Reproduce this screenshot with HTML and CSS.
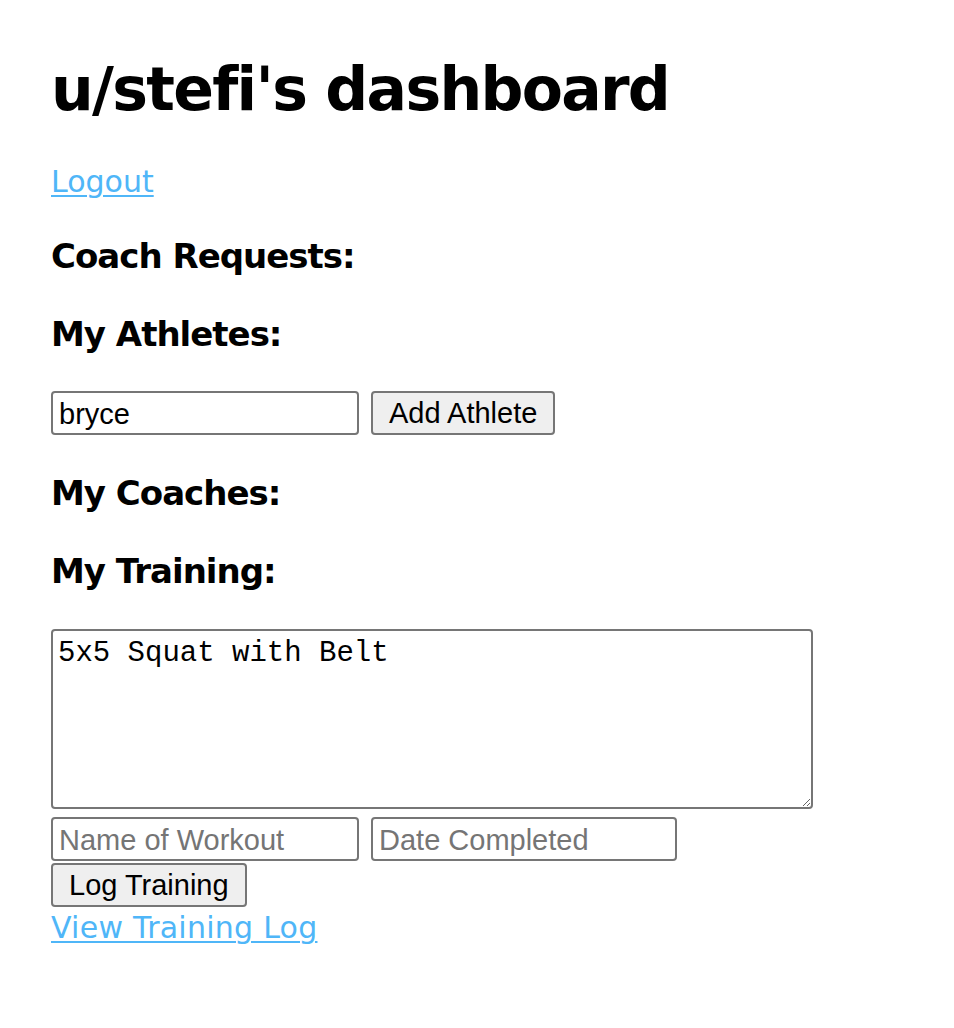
FILE: index.html
```html
<!DOCTYPE html>
<html>
<head>
<meta charset="utf-8">
<title>Dashboard</title>
<link rel="stylesheet" href="styles.css">
</head>
<body>
<main class="page">
  <h1 class="title">u/stefi's dashboard</h1>
  <div class="link-row"><a class="link" href="#">Logout</a></div>
  <h3 class="section section-first">Coach Requests:</h3>
  <h3 class="section">My Athletes:</h3>
  <form class="add-form">
    <input class="field field-user" type="text" value="bryce">
    <button class="btn" type="button">Add Athlete</button>
  </form>
  <h3 class="section">My Coaches:</h3>
  <h3 class="section">My Training:</h3>
  <form class="train-form">
    <textarea class="notes">5x5 Squat with Belt</textarea>
    <div class="train-row">
      <input class="field field-name" type="text" placeholder="Name of Workout">
      <input class="field field-date" type="text" placeholder="Date Completed">
    </div>
    <div class="btn-row"><button class="btn" type="button">Log Training</button></div>
  </form>
  <div class="link-row link-row-last"><a class="link link-wide" href="#">View Training Log</a></div>
</main>
</body>
</html>
```

FILE: styles.css
```css
html, body {
  margin: 0;
  padding: 0;
  background: #ffffff;
}

.page {
  padding: 54px 0 0 51px;
  font-family: "DejaVu Sans", sans-serif;
  color: #000000;
}

.title {
  margin: 0;
  font-size: 60px;
  line-height: 70px;
  font-weight: bold;
  letter-spacing: -1.7px;
}

.link-row {
  margin-top: 40px;
  font-size: 30px;
  line-height: 36px;
}

.link {
  color: #4fb6f8;
  text-decoration: underline;
  text-decoration-thickness: 2px;
  text-underline-offset: 3px;
}

.link-wide {
  letter-spacing: 0.25px;
}

.section {
  margin: 38px 0 0 0;
  font-size: 34px;
  line-height: 40px;
  font-weight: bold;
  letter-spacing: -1px;
}

.section-first {
  margin-top: 36px;
}

.add-form {
  margin-top: 37px;
  display: flex;
  gap: 12px;
}

.field {
  box-sizing: border-box;
  height: 44px;
  border: 2px solid #767676;
  border-radius: 4px;
  padding: 2px 6px 0 6px;
  font-family: "Liberation Sans", Arial, sans-serif;
  font-size: 29px;
  color: #000000;
  background: #ffffff;
  outline: none;
}

.field::placeholder {
  color: #757575;
}

.field-user,
.field-name {
  width: 308px;
}

.field-date {
  width: 306px;
}

.btn {
  box-sizing: border-box;
  height: 44px;
  border: 2px solid #767676;
  border-radius: 4px;
  padding: 1px 16px 0 16px;
  background: #efefef;
  font-family: "Liberation Sans", Arial, sans-serif;
  font-size: 29px;
  color: #000000;
}

.train-form {
  margin-top: 38px;
}

.notes {
  display: block;
  box-sizing: border-box;
  width: 762px;
  height: 180px;
  margin: 0;
  border: 2px solid #767676;
  border-radius: 4px;
  padding: 6px 5px 4px 5px;
  font-family: "Liberation Mono", "Courier New", monospace;
  font-size: 29px;
  color: #000000;
  outline: none;
}

.train-row {
  margin-top: 8px;
  display: flex;
  gap: 12px;
}

.btn-row {
  margin-top: 2px;
  display: flex;
}

.link-row-last {
  margin-top: 3px;
}
```
